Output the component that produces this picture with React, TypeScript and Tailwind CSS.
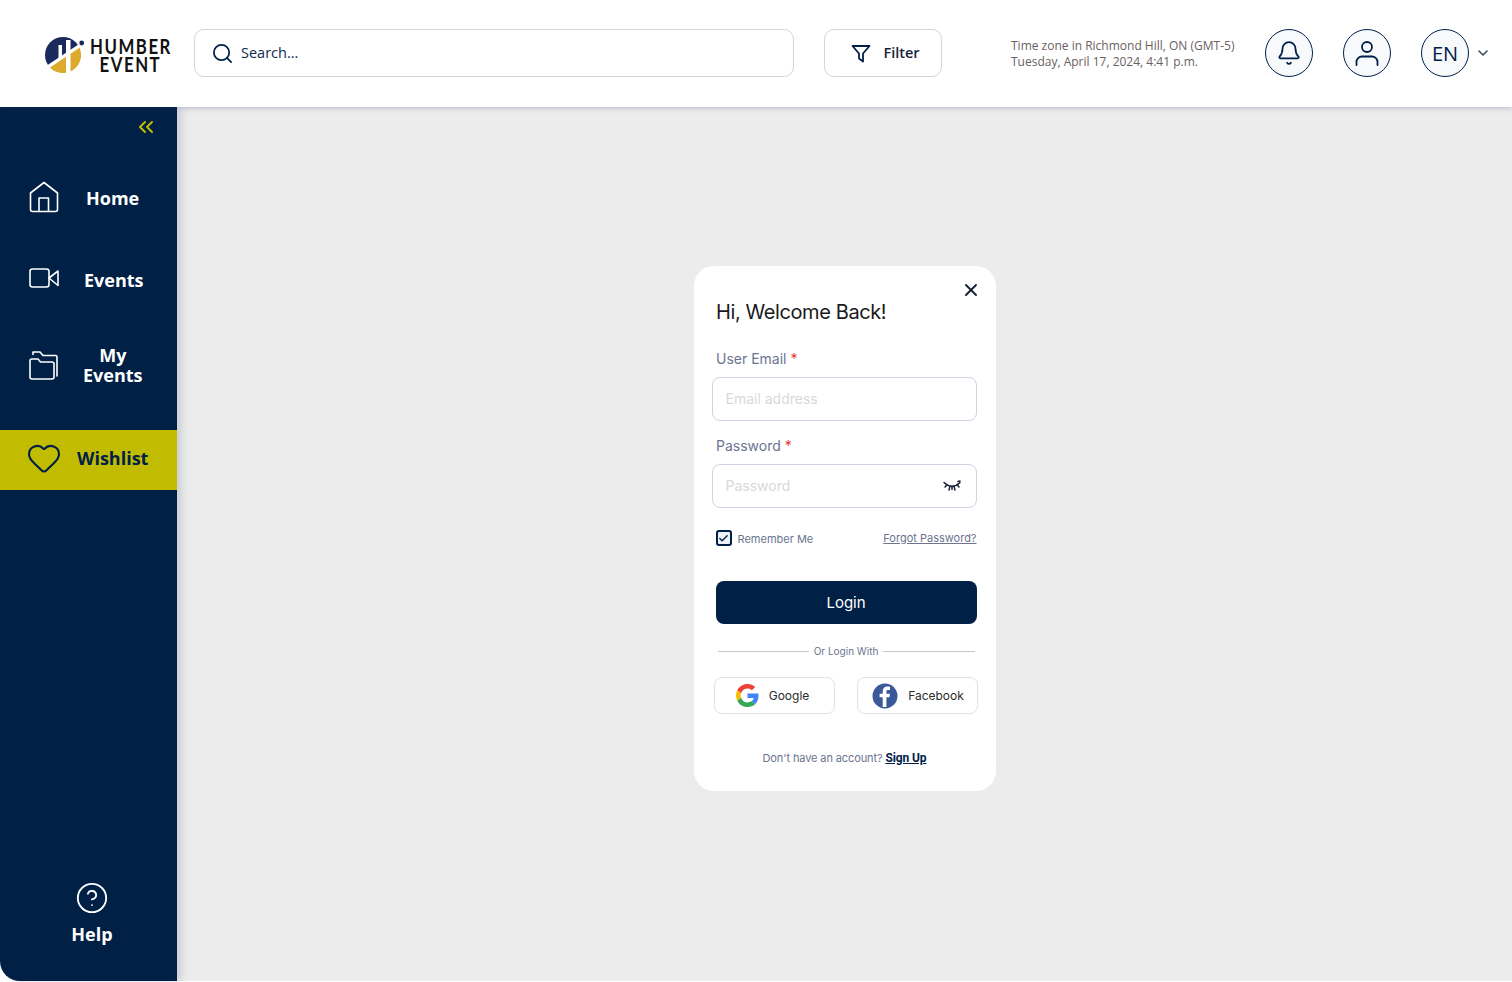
import { Bell, Check, ChevronDown, ChevronsLeft, CircleHelp, Heart, Search, X } from "lucide-react";

function Logo() {
  return (
    <div className="flex items-center gap-[1px]">
      <svg width="44" height="36" viewBox="0 0 44 36" className="shrink-0">
        <circle cx="18" cy="18" r="18" fill="#1b2a5c" />
        <path d="M-1 30.500 L36 5.800 L44 5.800 L44 36 L-1 36 Z" fill="#fff" />
        <path d="M34.500 10.800 A18 18 0 0 1 5 30.500 Z" fill="#dcaa2c" />
        <path d="M21 3 H25.500 V36 H21 Z" fill="#fff" />
        <path d="M13.500 8 H17 V19 L13.500 22 Z" fill="#fff" />
        <circle cx="36.700" cy="6" r="2.400" fill="#1b2a5c" />
      </svg>
      <div className="w-[81px]">
        <div className="w-[101px] origin-left scale-x-[0.8] text-center font-['Lato',sans-serif] text-[21px] font-bold leading-[18px] tracking-[0.09em] text-[#111]">
          <div>HUMBER</div>
          <div>EVENT</div>
        </div>
      </div>
    </div>
  );
}

function GoogleIcon() {
  return (
    <svg width="23" height="23" viewBox="0 0 48 48">
      <path fill="#EA4335" d="M24 9.500c3.500 0 6.700 1.200 9.200 3.600l6.900-6.900C35.900 2.400 30.500 0 24 0 14.600 0 6.500 5.400 2.600 13.200l8 6.200C12.500 13.700 17.800 9.500 24 9.500z" />
      <path fill="#4285F4" d="M47 24.500c0-1.600-.1-3.100-.4-4.500H24v9h12.900c-.6 3-2.200 5.500-4.700 7.200l7.700 6C44.400 38 47 31.800 47 24.500z" />
      <path fill="#FBBC05" d="M10.500 28.600c-.5-1.500-.8-3-.8-4.600s.3-3.100.8-4.600l-8-6.200C.9 16.500 0 20.100 0 24s.9 7.500 2.600 10.800l7.900-6.200z" />
      <path fill="#34A853" d="M24 48c6.500 0 11.900-2.100 15.900-5.800l-7.700-6c-2.200 1.500-4.900 2.300-8.200 2.300-6.200 0-11.500-4.200-13.400-9.900l-8 6.200C6.500 42.600 14.600 48 24 48z" />
    </svg>
  );
}

function FacebookIcon() {
  return (
    <svg width="26" height="26" viewBox="0 0 26 26">
      <circle cx="13" cy="13" r="12.500" fill="#3b5998" />
      <path fill="#fff" d="M14.400 24V14.300h3l.5-3.500h-3.500V8.600c0-1 .3-1.700 1.700-1.700h1.900V3.800c-.4 0-1.500-.2-2.800-.2-2.700 0-4.500 1.600-4.500 4.700v2.500H7.600v3.500h3.100V24z" />
    </svg>
  );
}

function EyeClosed() {
  return (
    <svg width="18" height="12" viewBox="0 0 18 12" fill="none" stroke="#1a2238" strokeWidth="1.500" strokeLinecap="round">
      <path d="M1 2.500C4 5.500 6 6.300 9 6.300S14 5.500 17 2.500" />
      <path d="M4 4.800 2 7M7 6.200 6 10M11 6.200 12 10M14 4.800 16 7M9 6.500V9.500" />
      <path d="M15 1.500 17 1" />
    </svg>
  );
}

function HomeIcon() {
  return (
    <svg width="32" height="32" viewBox="0 0 32 32" fill="none" stroke="currentColor" strokeWidth="1.600" strokeLinejoin="round">
      <path d="M2.500 12 16 1.500 29.500 12V28.500a2 2 0 0 1-2 2h-23a2 2 0 0 1-2-2Z" />
      <path d="M11 30.500V17h9.500v13.500" />
    </svg>
  );
}

function CameraIcon() {
  return (
    <svg width="30" height="21" viewBox="0 0 30 21" fill="none" stroke="currentColor" strokeWidth="1.600" strokeLinejoin="round">
      <rect x="1" y="1" width="19" height="18" rx="2.500" />
      <path d="M20 10 29 3V17.500Z" />
    </svg>
  );
}

function FoldersIcon() {
  return (
    <svg width="32" height="32" viewBox="0 0 32 32" fill="none" stroke="currentColor" strokeWidth="1.600" strokeLinejoin="round" strokeLinecap="round">
      <path d="M2 12a2 2 0 0 1 2-2h6l2.500 3H24a2 2 0 0 1 2 2v13a2 2 0 0 1-2 2H4a2 2 0 0 1-2-2Z" />
      <path d="M5 5.500V3h7l3 3.500h12.500a1.500 1.500 0 0 1 1.500 1.500V27" />
    </svg>
  );
}

function UserIcon() {
  return (
    <svg width="24" height="26" viewBox="0 0 24 26" fill="none" stroke="#00204a" strokeWidth="1.800" strokeLinecap="round">
      <circle cx="12" cy="7" r="5" />
      <path d="M1.500 25V22a5.500 5.500 0 0 1 5.500-5.500h10a5.500 5.500 0 0 1 5.500 5.500v3" />
    </svg>
  );
}

export default function App() {
  return (
    <div className="h-[982px] w-[1512px] overflow-hidden bg-white font-['Open_Sans',sans-serif]">
      <header className="relative z-20 flex h-[107px] items-center bg-white pb-[1px] shadow-[0_1px_5px_rgba(60,70,110,0.3)]">
        <div className="ml-[45px] mt-[4px] w-[149px]">
          <Logo />
        </div>
        <div className="flex h-[48px] w-[600px] items-center gap-[7px] rounded-[10px] border border-[#d5d5d8] pl-[16px] text-[14.500px] font-medium text-[#0f2a4d]">
          <Search size={23} strokeWidth={1.800} className="text-[#00204a]" />
          <span>Search...</span>
        </div>
        <div className="ml-[30px] flex h-[48px] w-[118px] items-center justify-center gap-[12px] rounded-[10px] border border-[#d5d5d8] pl-[5px] text-[14.500px] font-semibold text-[#17233a]">
          <svg width="20" height="20" viewBox="0 0 20 20" fill="none" stroke="#00204a" strokeWidth="1.800" strokeLinejoin="round">
            <path d="M1.500 3h17l-6.500 7.500v8l-4-3v-5z" />
          </svg>
          <span>Filter</span>
        </div>
        <div className="ml-[69px] mt-[1px] w-[254px] text-[12px] leading-[16px] text-[#6a5f5f]">
          <div>Time zone in Richmond Hill, ON (GMT-5)</div>
          <div>Tuesday, April 17, 2024, 4:41 p.m.</div>
        </div>
        <div className="flex h-[48px] w-[48px] items-center justify-center rounded-full border border-[#00204a] bg-[#f7f9fb]">
          <Bell size={26} strokeWidth={1.600} className="text-[#00204a]" />
        </div>
        <div className="ml-[30px] flex h-[48px] w-[48px] items-center justify-center rounded-full border border-[#00204a] bg-[#f7f9fb]">
          <UserIcon />
        </div>
        <div className="ml-[30px] flex h-[48px] w-[48px] items-center justify-center rounded-full border border-[#00204a] bg-[#f7f9fb] pt-[1px] text-[20px] text-[#00204a]">
          EN
        </div>
        <ChevronDown size={16} strokeWidth={2.400} className="ml-[6px] text-[#3b4a5e]" />
      </header>

      <div className="flex h-[874px]">
        <aside className="relative z-10 flex w-[177px] shrink-0 flex-col rounded-bl-[20px] bg-[#002046] shadow-[4px_0_8px_rgba(60,70,110,0.2)]">
          <div className="flex h-[40px] justify-end pr-[19px] pt-[8px]">
            <ChevronsLeft size={24} strokeWidth={2} className="text-[#c1bc00]" />
          </div>
          <div className="mt-[10px] flex h-[82px] items-center gap-[26px] pl-[28px] text-[18px] font-bold text-white">
            <span className="-mt-[2px]">
              <HomeIcon />
            </span>
            <span>Home</span>
          </div>
          <div className="flex h-[82px] items-center gap-[25px] pl-[29px] text-[18px] font-bold text-white">
            <span className="-mt-[3px]">
              <CameraIcon />
            </span>
            <span>Events</span>
          </div>
          <div className="flex h-[88px] items-center gap-[23px] pl-[28px] text-[18px] font-bold leading-[20px] text-white">
            <FoldersIcon />
            <span className="text-center">
              My
              <br />
              Events
            </span>
          </div>
          <div className="mt-[21px] flex h-[60px] items-center gap-[15px] bg-[#c1bc00] pb-[4px] pl-[26px] text-[18px] font-bold text-[#00204a]">
            <Heart size={36} strokeWidth={1.400} />
            <span>Wishlist</span>
          </div>
          <div className="mt-auto flex flex-col items-center pb-[35px] pl-[7px] text-[18px] font-bold text-white">
            <CircleHelp size={34} strokeWidth={1.300} />
            <span className="mt-[7px] leading-[24px]">Help</span>
          </div>
        </aside>

        <main className="flex flex-1 justify-center bg-[#ececec] pt-[159px] font-['Inter',sans-serif]">
          <div className="relative h-[525px] w-[302px] rounded-[20px] bg-white px-[18px] pt-[34px]">
            <X size={20} strokeWidth={2.400} className="absolute right-[15px] top-[14px] text-[#1a2238]" />
            <h1 className="pl-[4.500px] text-[20px] leading-[24px] tracking-[-0.02em] text-[#1a1a1a]">Hi, Welcome Back!</h1>

            <label className="mt-[25px] block pl-[4.500px] text-[14px] leading-[20px] text-[#6b7490]">
              User Email <span className="text-[#e53935]">*</span>
            </label>
            <div className="mt-[8px] flex h-[44px] w-[265px] items-center rounded-[8px] border border-[#cfd4e2] px-[13px] pb-[1px] text-[14px] text-[#d9d9d9]">
              Email address
            </div>

            <label className="mt-[15px] block pl-[4.500px] text-[14px] leading-[20px] text-[#6b7490]">
              Password <span className="text-[#e53935]">*</span>
            </label>
            <div className="mt-[8px] flex h-[44px] w-[265px] items-center justify-between rounded-[8px] border border-[#cfd4e2] pb-[1px] pl-[13px] pr-[15px] text-[14px] text-[#d9d9d9]">
              <span>Password</span>
              <EyeClosed />
            </div>

            <div className="mt-[20px] flex h-[20px] w-[265px] items-center justify-between pl-[4px] text-[11px] text-[#6b7490]">
              <div className="flex items-center gap-[6px]">
                <span className="flex h-[16px] w-[16px] items-center justify-center rounded-[3px] border-2 border-[#00204a] bg-[#eef1f8]">
                  <Check size={11} strokeWidth={3} className="text-[#00204a]" />
                </span>
                <span className="mt-[1px] leading-[20px]">Remember Me</span>
              </div>
              <span className="underline">Forgot Password?</span>
            </div>

            <button className="ml-[4px] mt-[33px] flex h-[43px] w-[261px] items-center justify-center rounded-[8px] bg-[#002046] pt-[1px] text-[15px] text-white">
              Login
            </button>

            <div className="ml-[6px] mt-[17px] flex h-[20px] w-[257px] items-center gap-[5px] text-[10px] text-[#6b7490]">
              <div className="h-px flex-1 bg-[#c4c7d0]" />
              <span>Or Login With</span>
              <div className="h-px flex-1 bg-[#c4c7d0]" />
            </div>

            <div className="ml-[2px] mt-[16px] flex w-[264px] justify-between text-[12px] text-[#2b2b2b]">
              <div className="flex h-[37px] w-[121px] items-center justify-center gap-[10px] rounded-[8px] border border-[#e2e2e2] pr-[3px]">
                <GoogleIcon />
                <span className="mt-[1px]">Google</span>
              </div>
              <div className="flex h-[37px] w-[121px] items-center justify-center gap-[10px] rounded-[8px] border border-[#e2e2e2] pl-[2px]">
                <FacebookIcon />
                <span className="mt-[1px]">Facebook</span>
              </div>
            </div>

            <p className="ml-[4px] mt-[35px] w-[261px] pr-[3px] text-center text-[11px] leading-[18px] tracking-[-0.01em] text-[#6b7490]">
              Don't have an account?{" "}
              <span className="font-['Roboto',sans-serif] text-[12px] font-bold text-[#00204a] underline">Sign Up</span>
            </p>
          </div>
        </main>
      </div>
    </div>
  );
}
